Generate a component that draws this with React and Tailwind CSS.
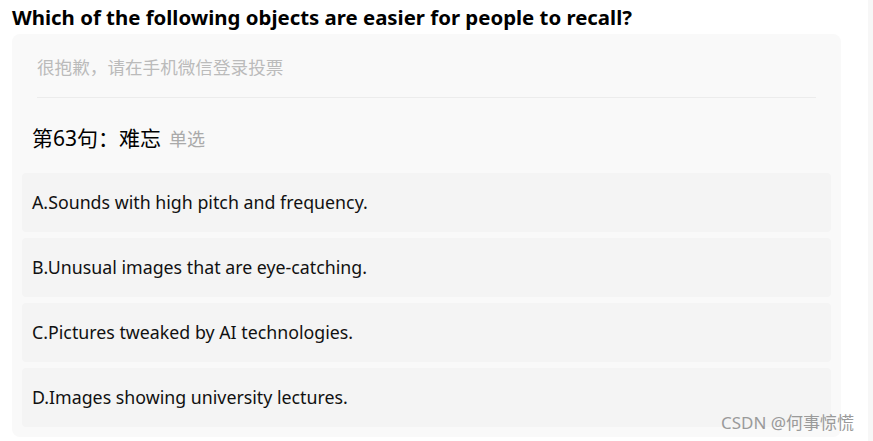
export default function App() {
  const options = [
    "A.Sounds with high pitch and frequency.",
    "B.Unusual images that are eye-catching.",
    "C.Pictures tweaked by AI technologies.",
    "D.Images showing university lectures.",
  ];

  return (
    <div
      className="relative w-[873px] h-[441px] bg-white overflow-hidden"
      style={{ fontFamily: '"Noto Sans", "Noto Sans CJK SC", sans-serif' }}
    >
      <div className="absolute right-0 top-0 w-[5px] h-full bg-[#f7f7f7]" />
      <h1 className="pl-3 pt-[3px] h-[34px] text-[20.4px] leading-[28px] font-bold text-black">
        Which of the following objects are easier for people to recall?
      </h1>
      <div className="ml-3 w-[829px] h-[403px] rounded-lg bg-[#f9f9f9] px-[10px]">
        <div className="mx-[15px] pt-[20px] pb-[17px] border-b border-[#ececec] text-[17.6px] leading-[26px] text-[#bbbbbb]">
          很抱歉，请在手机微信登录投票
        </div>
        <div className="pl-[10px] pt-[26px] pb-[21px] h-[75px] flex items-baseline gap-[8px]">
          <span className="text-[21px] leading-[28px] text-black">第63句：难忘</span>
          <span className="text-[18px] text-[#aaaaaa]">单选</span>
        </div>
        <div className="flex flex-col gap-[6px]">
          {options.map((o) => (
            <div
              key={o}
              className="h-[59px] rounded bg-[#f4f4f4] pl-[10px] flex items-center text-[17.8px] text-[#111111]"
            >
              {o}
            </div>
          ))}
        </div>
      </div>
      <div className="absolute left-[721px] top-[411px] text-[17px] leading-[24px] text-[#9a9a9a]">
        CSDN @何事惊慌
      </div>
    </div>
  );
}
